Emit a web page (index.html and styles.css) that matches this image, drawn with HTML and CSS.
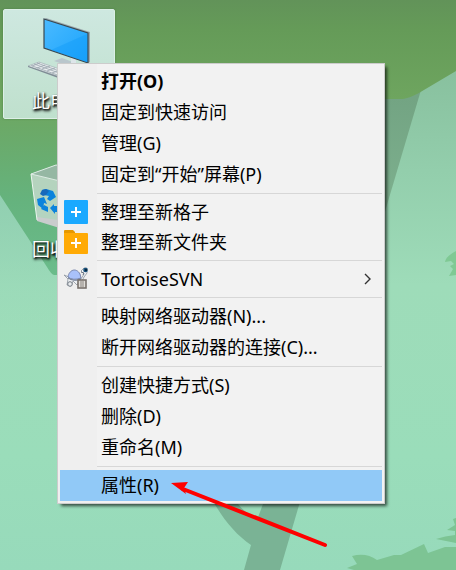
FILE: index.html
```html
<!DOCTYPE html>
<html lang="zh-CN">
<head>
<meta charset="utf-8">
<meta name="viewport" content="width=device-width, initial-scale=1">
<title>桌面</title>
<link rel="stylesheet" href="styles.css">
</head>
<body>
<main class="desktop">
  <svg class="wallpaper" viewBox="0 0 456 570" preserveAspectRatio="xMidYMid slice" aria-hidden="true">
    <defs>
      <linearGradient id="sky" x1="0" y1="0" x2="0" y2="1">
        <stop offset="0.12" stop-color="#88c09e"/>
        <stop offset="0.3" stop-color="#93ceac"/>
        <stop offset="0.5" stop-color="#9edcb9"/>
        <stop offset="0.8" stop-color="#9addba"/>
        <stop offset="1" stop-color="#97dabb"/>
      </linearGradient>
      <linearGradient id="canopy" gradientUnits="userSpaceOnUse" x1="0" y1="0" x2="0" y2="99">
        <stop offset="0" stop-color="#629359"/>
        <stop offset="0.3" stop-color="#659b58"/>
        <stop offset="1" stop-color="#6ea55f"/>
      </linearGradient>
      <linearGradient id="hill" gradientUnits="userSpaceOnUse" x1="0" y1="99" x2="0" y2="270">
        <stop offset="0" stop-color="#6ea65f"/>
        <stop offset="0.25" stop-color="#6aab6c"/>
        <stop offset="0.6" stop-color="#65b37e"/>
        <stop offset="1" stop-color="#6abb8a"/>
      </linearGradient>
      <linearGradient id="slope" gradientUnits="userSpaceOnUse" x1="0" y1="195" x2="0" y2="330">
        <stop offset="0" stop-color="#91cfb1"/>
        <stop offset="1" stop-color="#98dabb" stop-opacity="0"/>
      </linearGradient>
      <linearGradient id="trunk" gradientUnits="userSpaceOnUse" x1="0" y1="98" x2="0" y2="205">
        <stop offset="0" stop-color="#73a483"/>
        <stop offset="1" stop-color="#7db08e"/>
      </linearGradient>
    </defs>
    <rect width="456" height="570" fill="url(#sky)"/>
    <rect y="195" width="60" height="135" fill="url(#slope)"/>
    <path d="M340 90H421L384 215H340Z" fill="url(#trunk)"/>
    <path d="M0 99H80V275H54Q51 274 47 267L0 195Z" fill="url(#hill)"/>
    <path d="M0 0H456V71L418 93.500Q409 98 403 99H0Z" fill="url(#canopy)"/>
    <path d="M211 497C221 517 235 534 251 545L244 570H280L302 495H265L257 519L240 504L233 495Z" fill="#7ab395"/>
    <path d="M230 495H270L262 508Z" fill="#7ab395"/>
    <path d="M238 504H263L257 520Q246 514 238 504Z" fill="#9addba"/>
    <path d="M456 251Q446 256 445 262L451 261L454 264L450 266L453 269L449 276L456 275Z" fill="#7fc994"/>
    <path d="M347 568L357 564L352 556Q366 552 377 560L394 555H401L424 544L428 553L445 547H456V543L436 539Q445 536 455 535V531L447 530L455 525L453 519L456 518V570H354Z" fill="#7dc494"/>
  </svg>

  <a class="shortcut shortcut-computer" href="#computer">
    <svg class="shortcut-icon" viewBox="3 1 72 72" aria-hidden="true">
      <defs>
        <linearGradient id="screen" x1="0" y1="0" x2="1" y2="1">
          <stop offset="0" stop-color="#4abaff"/>
          <stop offset="1" stop-color="#1aa3fc"/>
        </linearGradient>
      </defs>
      <path d="M34 47L42 44L58 50L52 53Z" fill="#b9c6cc"/>
      <path d="M51 43H56V50H51Z" fill="#dce5e9"/>
      <path d="M24 5L26 4L70 18V48L68 49Z" fill="#9ca9ad"/>
      <path d="M24 5L68 19V49L24 34Z" fill="url(#screen)" stroke="#3a4850" stroke-width="1.200"/>
      <path d="M31 36L67 20V48Z" fill="#119cf8" opacity=".45"/>
      <path d="M8 52L19 48L60 62L52 67Z" fill="#e8ecee" stroke="#9ba7ae" stroke-width=".6"/>
      <path d="M8 52L52 67V69L8 53Z" fill="#7f8b95"/>
      <path d="M12 52L20 49M17 54L25 51M22 55L30 52M27 57L35 54M32 59L40 56M14 50L53 64M17 49L56 63M11 51.500L50 65.500" stroke="#9aa6af" stroke-width=".8"/>
    </svg>
    <span class="shortcut-label">此电脑</span>
  </a>

  <a class="shortcut shortcut-bin" href="#recycle-bin">
    <svg class="shortcut-icon" viewBox="3 1 72 72" aria-hidden="true">
      <path d="M11 12L36 3L62 8L56 56L46 64L17 57Z" fill="#cfdfd6" opacity=".75"/>
      <path d="M11 12L36 3L62 8L44 20Z" fill="#95b7a3"/>
      <path d="M17 55L38 58L56 56L46 68L17 59Z" fill="#c9cccd"/>
      <path d="M11 12L44 20L62 8M11 12L36 3L62 8" fill="none" stroke="#dcebe3"/>
      <path d="M11 12L17 58" stroke="#eff6f2"/>
      <g fill="#0b83dc">
        <path d="M22 28L26 27L33 29L36 35L30 39L27 37L29 34L24 33Z"/>
        <path d="M17 37L24 35L27 42L24 41L23 47L18 43Z"/>
        <path d="M24 43L28 45V50L21 47Z"/>
        <path d="M30 46L34 42V44L38 44V50H35V52Z"/>
      </g>
      <path d="M22 28L26 27L29 29L26 33L23 34L20 32Z" fill="#1769bb"/>
    </svg>
    <span class="shortcut-label">回收站</span>
  </a>

  <ul class="menu" role="menu">
    <li><button class="item item-default" role="menuitem">打开(O)</button></li>
    <li><button class="item" role="menuitem">固定到快速访问</button></li>
    <li><button class="item" role="menuitem">管理(G)</button></li>
    <li><button class="item" role="menuitem">固定到“开始”屏幕(P)</button></li>
    <li class="divider" role="separator"></li>
    <li>
      <button class="item item-icon" role="menuitem">
        <svg class="glyph" viewBox="0 0 24 24" aria-hidden="true"><rect width="24" height="24" rx="1" fill="#1aa9ff"/><path d="M12 7V17M7 12H17" stroke="#fff" stroke-width="2"/></svg>
        整理至新格子
      </button>
    </li>
    <li>
      <button class="item item-icon" role="menuitem">
        <svg class="glyph" viewBox="0 0 24 24" aria-hidden="true"><path d="M0 1Q0 0 1 0H9L11 2V6H0Z" fill="#e69800"/><path d="M0 3H23Q24 3 24 4V23Q24 24 23 24H1Q0 24 0 23Z" fill="#ffaa05"/><path d="M12 8V18M7 13H17" stroke="#fff" stroke-width="2"/></svg>
        整理至新文件夹
      </button>
    </li>
    <li class="divider" role="separator"></li>
    <li>
      <button class="item item-icon" role="menuitem" aria-haspopup="true">
        <svg class="glyph" viewBox="0 0 24 24" aria-hidden="true">
          <path d="M0 8L5 10L17 12L20 7L17 4L20 1H23V6L20 10L18 14L15 15L13 18L9 14L7 19L3 18L4 12Z" fill="#eef1f4" stroke="#8c949e" stroke-width=".8"/>
          <path d="M4 10C5 3 12 0 16 7L17 11Q9 14 4 10Z" fill="#a9c1fa" stroke="#7885ad"/>
          <path d="M4 11Q10 15 17 12" fill="none" stroke="#65718a"/>
          <circle cx="21.500" cy="3" r="2.300" fill="#164f79"/><circle cx="22" cy="3" r="1" fill="#071b2b"/>
          <path d="M17 5L20 6L19 8" fill="none" stroke="#68727f"/>
          <circle cx="6" cy="17" r="2.300" fill="#e9ecef" stroke="#737b84"/>
          <rect x="14" y="13" width="8" height="8" fill="#e0ddd8" stroke="#77716c" stroke-width="1.600"/>
          <path d="M16 15H20M16 17H20M16 19H20" stroke="#77716c" stroke-width=".8"/>
        </svg>
        TortoiseSVN
        <svg class="chevron" viewBox="0 0 8 12" aria-hidden="true"><path d="M1 1L6 6L1 11" fill="none" stroke="#333" stroke-width="1.400"/></svg>
      </button>
    </li>
    <li class="divider" role="separator"></li>
    <li><button class="item" role="menuitem">映射网络驱动器(N)...</button></li>
    <li><button class="item" role="menuitem">断开网络驱动器的连接(C)...</button></li>
    <li class="divider" role="separator"></li>
    <li><button class="item" role="menuitem">创建快捷方式(S)</button></li>
    <li><button class="item" role="menuitem">删除(D)</button></li>
    <li><button class="item" role="menuitem">重命名(M)</button></li>
    <li class="divider" role="separator"></li>
    <li><button class="item item-selected" role="menuitem">属性(R)</button></li>
  </ul>

  <svg class="pointer" viewBox="0 0 160 70" aria-hidden="true">
    <path d="M12 9L154 65" stroke="#fe0000" stroke-width="4" stroke-linecap="round"/>
    <path d="M0 3L17 2L13 8L15 14Z" fill="#fe0000"/>
  </svg>
</main>
</body>
</html>
```
FILE: styles.css
```css
* {
  box-sizing: border-box;
}

body {
  margin: 0;
  font-family: "Noto Sans", "Noto Sans CJK SC", sans-serif;
  font-size: 18px;
  color: #000;
}

.desktop {
  position: relative;
  min-height: 100vh;
  overflow: hidden;
}

.wallpaper {
  position: absolute;
  inset: 0;
  width: 100%;
  height: 100%;
}

/* Desktop shortcuts sit freely on the wallpaper */
.shortcut {
  position: absolute;
  left: 3px;
  display: flex;
  flex-direction: column;
  align-items: center;
  width: 112px;
  padding: 5px 0;
  border: 1px solid transparent;
  border-radius: 2px;
  text-decoration: none;
}

.shortcut-computer {
  top: 9px;
  border-color: #dcefe6;
  background: linear-gradient(#cee8e0, #bfe0cd);
  box-shadow: 0 0 2px #4a7a48;
}

.shortcut-bin {
  top: 157px;
}

.shortcut-icon {
  width: 72px;
  height: 72px;
}

.shortcut-label {
  font-family: "Noto Sans CJK SC", sans-serif;
  line-height: 26px;
  color: #fff;
  text-shadow: 1px 1px 2px #000, 1px 2px 3px #000;
}

.menu {
  position: absolute;
  top: 63px;
  left: 57px;
  min-width: 328px;
  margin: 0;
  padding: 2px;
  list-style: none;
  border: 1px solid #ccc;
  background: linear-gradient(to right, #efefef 39px, #f2f2f2 39px);
  box-shadow: 3px 3px 3px -1px rgba(0, 0, 0, 0.65);
}

.item {
  display: flex;
  align-items: center;
  gap: 13px;
  width: 100%;
  height: 31px;
  padding: 0 10px 2px 41px;
  border: 0;
  background: none;
  font: inherit;
  line-height: 28px;
  color: inherit;
  text-align: left;
  white-space: nowrap;
}

.item-default {
  font-weight: 700;
}

.item-icon {
  height: 30px;
  padding: 0 10px 0 4px;
}

.item-selected {
  background: #91c9f7;
}

.glyph {
  flex: none;
  width: 24px;
  height: 24px;
}

.chevron {
  width: 8px;
  height: 12px;
  margin-left: auto;
}

.divider {
  height: 1px;
  margin: 3px 0 3px 37px;
  background: #d7d7d7;
}

/* Arrow drawn over the menu */
.pointer {
  position: absolute;
  top: 480px;
  left: 171px;
  width: 160px;
  height: 70px;
  pointer-events: none;
}
```
